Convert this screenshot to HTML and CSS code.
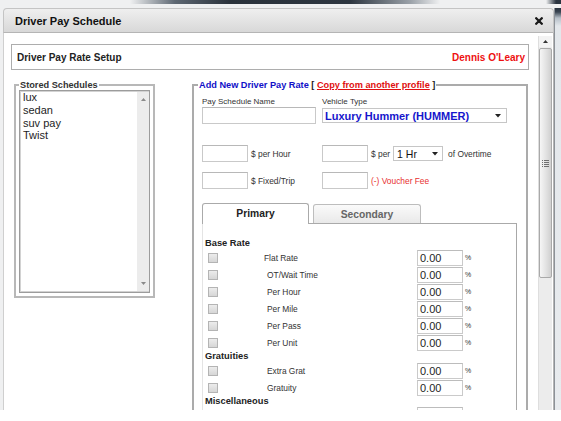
FILE: index.html
```html
<!DOCTYPE html>
<html>
<head>
<meta charset="utf-8">
<title>Driver Pay Schedule</title>
<link rel="stylesheet" href="styles.css">
</head>
<body>
<div class="screen">
  <div class="topbar"><div class="topline"></div></div>
  <div class="stage">
    <div class="dialog">
      <div class="titlebar">
        <span class="title">Driver Pay Schedule</span>
        <svg class="close" width="8" height="8" viewBox="0 0 8 8"><path d="M1.2 1.2 L6.8 6.8 M6.8 1.2 L1.2 6.8" stroke="#1a1a1a" stroke-width="2.3" stroke-linecap="round"/></svg>
      </div>
      <div class="dbody">
        <div class="main">
          <div class="header">
            <span class="h-title">Driver Pay Rate Setup</span>
            <span class="h-name">Dennis O'Leary</span>
          </div>
          <div class="columns">
            <fieldset class="stored">
              <legend class="lg">Stored Schedules</legend>
              <div class="listbox">
                <ul class="items">
                  <li>lux</li>
                  <li>sedan</li>
                  <li>suv pay</li>
                  <li>Twist</li>
                </ul>
                <div class="lb-scroll">
                  <svg width="5" height="3" viewBox="0 0 5 3"><path d="M0 3 L2.5 0 L5 3 Z" fill="#8a8a8a"/></svg>
                  <svg width="5" height="3" viewBox="0 0 5 3"><path d="M0 0 L2.5 3 L5 0 Z" fill="#8a8a8a"/></svg>
                </div>
              </div>
            </fieldset>
            <fieldset class="addnew">
              <legend class="lg lg-add"><span class="blue">Add New Driver Pay Rate</span> [ <span class="copy">Copy from another profile</span> ]</legend>
              <div class="r1">
                <div class="c1">
                  <div class="toplabel">Pay Schedule Name</div>
                  <div class="tb tb-name"></div>
                </div>
                <div class="c2">
                  <div class="toplabel">Vehicle Type</div>
                  <div class="sel sel-vehicle"><span>Luxury Hummer (HUMMER)</span><svg width="6" height="4" viewBox="0 0 6 4"><path d="M0 0 L6 0 L3 3.5 Z" fill="#222"/></svg></div>
                </div>
              </div>
              <div class="r2">
                <div class="grp">
                  <div class="tb tb-s"></div><span class="txt">$ per Hour</span>
                </div>
                <div class="grp">
                  <div class="tb tb-s"></div><span class="txt">$ per</span>
                  <div class="sel sel-hr"><span>1 Hr</span><svg width="6" height="4" viewBox="0 0 6 4"><path d="M0 0 L6 0 L3 3.5 Z" fill="#222"/></svg></div>
                  <span class="txt txt-ot">of Overtime</span>
                </div>
              </div>
              <div class="r3">
                <div class="grp">
                  <div class="tb tb-s"></div><span class="txt">$ Fixed/Trip</span>
                </div>
                <div class="grp">
                  <div class="tb tb-s"></div><span class="txt red">(-) Voucher Fee</span>
                </div>
              </div>
              <div class="tabs">
                <div class="tab active">Primary</div>
                <div class="tab">Secondary</div>
              </div>
              <div class="panel">
                <div class="sec">Base Rate</div>
                <div class="row"><span class="cb"></span><span class="rl rl-first">Flat Rate</span><span class="num">0.00</span><span class="pct">%</span></div>
                <div class="row"><span class="cb"></span><span class="rl">OT/Wait Time</span><span class="num">0.00</span><span class="pct">%</span></div>
                <div class="row"><span class="cb"></span><span class="rl">Per Hour</span><span class="num">0.00</span><span class="pct">%</span></div>
                <div class="row"><span class="cb"></span><span class="rl">Per Mile</span><span class="num">0.00</span><span class="pct">%</span></div>
                <div class="row"><span class="cb"></span><span class="rl">Per Pass</span><span class="num">0.00</span><span class="pct">%</span></div>
                <div class="row"><span class="cb"></span><span class="rl">Per Unit</span><span class="num">0.00</span><span class="pct">%</span></div>
                <div class="sec">Gratuities</div>
                <div class="row"><span class="cb"></span><span class="rl">Extra Grat</span><span class="num">0.00</span><span class="pct">%</span></div>
                <div class="row"><span class="cb"></span><span class="rl">Gratuity</span><span class="num">0.00</span><span class="pct">%</span></div>
                <div class="sec">Miscellaneous</div>
                <div class="row row-cut"><span class="rl rl-blank"></span><span class="num"></span></div>
              </div>
            </fieldset>
          </div>
        </div>
        <div class="vscroll">
          <div class="vs-up"><svg width="5" height="3" viewBox="0 0 5 3"><path d="M0 3 L2.5 0 L5 3 Z" fill="#333"/></svg></div>
          <div class="vs-thumb">
            <svg width="7" height="7" viewBox="0 0 7 7"><path d="M0 0.5 H1 M2 0.5 H7 M0 2.5 H1 M2 2.5 H7 M0 4.5 H1 M2 4.5 H7 M0 6.5 H1 M2 6.5 H7" stroke="#6f6f6f" stroke-width="1"/></svg>
          </div>
          <div class="vs-track"></div>
        </div>
      </div>
    </div>
    <div class="side"></div>
  </div>
</div>
</body>
</html>
```
FILE: styles.css
```css
* { box-sizing: border-box; }
html, body { margin: 0; padding: 0; background: #ffffff; }
body { font-family: "Liberation Sans", Arial, sans-serif; color: #222; }

.screen {
  width: 561px;
  height: 410px;
  overflow: hidden;
  background: #eff0f1;
  display: flex;
  flex-direction: column;
}
.topbar {
  flex: none;
  height: 8px;
}
.topline {
  height: 4px;
  background: linear-gradient(90deg, #eff0f1 0px, #eff0f1 130px, #5e6873 175px, #2a323b 230px, #2d3640 350px, #9aa1a8 410px, #eff0f1 440px, #eff0f1 546px, #2a3440 556px);
}
.stage {
  flex: 1;
  display: flex;
  padding-left: 3px;
  min-height: 0;
}
.dialog {
  width: 551px;
  flex: none;
  display: flex;
  flex-direction: column;
}
.side {
  flex: 1;
  background: linear-gradient(to bottom, #2a3440 0px, #3a4552 4px, #b7c0c9 10px, #e3e7eb 18px, #e8ebee 100%);
  border-left: 1px solid #8d9298;
}

/* title bar */
.titlebar {
  flex: none;
  height: 25px;
  border: 1px solid #c4c4c4;
  border-bottom-color: #b5b5b5;
  border-radius: 4px 4px 0 0;
  background: linear-gradient(#efefef, #d8d8d8);
  display: flex;
  align-items: center;
  justify-content: space-between;
  padding: 0 10px 0 11px;
}
.title {
  font-weight: bold;
  font-size: 11px;
  color: #111;
}
.close { display: block; }

/* body */
.dbody {
  flex: 1;
  display: flex;
  background: #fff;
  border-left: 1px solid #cfcfcf;
  border-right: 1px solid #b5b5b5;
  min-height: 0;
}
.main {
  width: 534px;
  flex: none;
  padding: 11px 0 0 7px;
}

.header {
  width: 518px;
  height: 26px;
  border: 1px solid #adadad;
  display: flex;
  align-items: center;
  justify-content: space-between;
  padding: 0 3px 0 5px;
  font-weight: bold;
  font-size: 10px;
}
.h-title { color: #222; }
.h-name { color: #ee1111; }

.columns {
  display: flex;
  align-items: flex-start;
  margin-top: 10px;
}

fieldset {
  margin: 0;
  min-width: 0;
  flex: none;
}
.lg {
  padding: 0 1px;
  font-weight: bold;
  font-size: 9.2px;
  line-height: 10px;
  color: #333;
}
.stored {
  margin-left: 3px;
  width: 141px;
  padding: 0 3px 3px;
  border: 2px solid #b8b8b8;
}
.listbox {
  width: 131px;
  height: 203px;
  border: 1px solid #9c9c9c;
  box-shadow: inset 0 0 0 1px #d2d2d2;
  display: flex;
  justify-content: space-between;
}
.items {
  list-style: none;
  margin: 0;
  padding: 0 0 0 3px;
  font-size: 11px;
  line-height: 12.8px;
  color: #1e1e1e;
}
.lb-scroll {
  width: 12px;
  margin: 1px 0;
  background: #ececec;
  display: flex;
  flex-direction: column;
  justify-content: space-between;
  align-items: center;
  padding: 6px 0 6px;
}
.lb-scroll svg { display: block; }

.addnew {
  margin-left: 37px;
  width: 336px;
  padding: 0 0 0 8px;
  border: 2px solid #ababab;
  border-bottom: none;
}
.lg-add {
  margin-left: -4px;
  color: #222;
}
.blue { color: #1010c8; }
.copy { color: #e01010; text-decoration: underline; }

.r1 { display: flex; margin-top: 7px; }
.c1 { width: 120px; }
.toplabel {
  font-size: 8px;
  line-height: 10px;
  color: #333;
}
.tb {
  height: 17px;
  border: 1px solid #c9c9c9;
  border-top-color: #b8b8b8;
  background: #fff;
  flex: none;
}
.tb-name { width: 114px; }
.tb-s { width: 46px; }
.sel {
  height: 15px;
  border: 1px solid #c6c6c6;
  display: flex;
  align-items: center;
  justify-content: space-between;
  background: #fff;
  flex: none;
}
.sel svg { display: block; }
.sel-vehicle {
  width: 185px;
  margin-top: 1px;
  padding: 0 5px 0 2px;
  font-weight: bold;
  font-size: 11px;
  color: #1616cc;
}
.sel-hr {
  width: 50px;
  margin-left: 3px;
  padding: 0 4px 0 3px;
  font-size: 10.5px;
  color: #111;
}

.r2 { display: flex; margin-top: 21px; }
.r3 { display: flex; margin-top: 10px; }
.grp { width: 120px; display: flex; align-items: center; flex: none; }
.grp + .grp { width: auto; }
.txt {
  margin-left: 3px;
  font-size: 8.4px;
  color: #333;
  white-space: nowrap;
}
.txt-ot { margin-left: 5px; }
.red { color: #e83030; }

.tabs {
  margin-top: 14px;
  width: 315px;
  height: 21px;
  display: flex;
  align-items: flex-end;
  border-bottom: 1px solid #aaaaaa;
}
.tab {
  width: 108px;
  height: 19px;
  margin-left: 4px;
  border: 1px solid #bdbdbd;
  border-bottom: none;
  border-radius: 3px 3px 0 0;
  background: linear-gradient(#fafafa, #e9e9e9);
  display: flex;
  align-items: center;
  justify-content: center;
  font-weight: bold;
  font-size: 10.3px;
  color: #666;
}
.tab.active {
  width: 107px;
  height: 21px;
  margin-left: 0;
  margin-bottom: -1px;
  border-color: #aaaaaa;
  background: #fff;
  color: #222;
  padding-bottom: 1px;
}

.panel {
  width: 315px;
  border-right: 1px solid #a8a8a8;
  border-left: 1px solid #e4e4e4;
  padding: 14px 0 0 2px;
}
.sec {
  font-weight: bold;
  font-size: 9.3px;
  line-height: 11px;
  height: 11px;
  color: #222;
}
.row {
  height: 17px;
  display: flex;
  align-items: center;
}
.row-cut { align-items: flex-start; }
.cb {
  width: 10px;
  height: 10px;
  margin-left: 3px;
  border: 1px solid #b4b4b4;
  background: linear-gradient(#ececec, #d6d6d6);
  flex: none;
}
.rl {
  margin-left: 49px;
  width: 150px;
  font-size: 8.4px;
  color: #333;
  flex: none;
}
.rl-first { margin-left: 46px; width: 153px; }
.rl-blank { margin-left: 0; width: 212px; }
.num {
  width: 46px;
  height: 16px;
  border: 1px solid #cacaca;
  border-top-color: #bcbcbc;
  padding-left: 2px;
  font-size: 11px;
  line-height: 14px;
  color: #1e1e1e;
  flex: none;
}
.pct {
  margin-left: 2px;
  font-size: 7px;
  color: #333;
}

/* main scrollbar */
.vscroll {
  width: 14px;
  flex: none;
  margin-top: 3px;
  display: flex;
  flex-direction: column;
  background: #ececec;
  border-left: 1px solid #dedede;
}
.vs-up {
  height: 11px;
  flex: none;
  background: #f3f3f3;
  display: flex;
  align-items: center;
  justify-content: center;
}
.vs-up svg { display: block; }
.vs-thumb {
  height: 230px;
  flex: none;
  margin: 1px 0 0 0;
  border: 1px solid #a9a9a9;
  border-radius: 2px;
  background: linear-gradient(90deg, #f6f6f6, #e2e2e2 55%, #d0d0d0);
  display: flex;
  align-items: center;
  justify-content: center;
}
.vs-thumb svg { display: block; }
.vs-track { flex: 1; }
```
